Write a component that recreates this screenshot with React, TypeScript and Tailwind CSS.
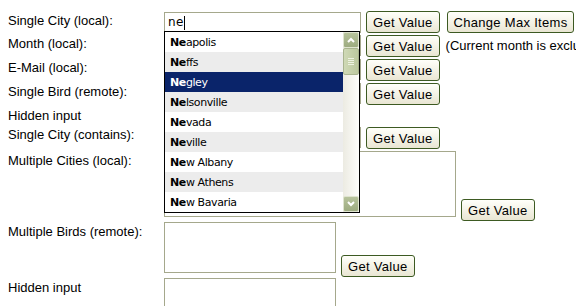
import { FunctionComponent, ReactNode } from "react";

const cities = [
  "Neapolis",
  "Neffs",
  "Negley",
  "Nelsonville",
  "Nevada",
  "Neville",
  "New Albany",
  "New Athens",
  "New Bavaria",
];

const Btn: FunctionComponent<{ children: ReactNode; className?: string }> = ({ children, className }) => (
  <button
    className={
      "h-[22px] shrink-0 px-[6px] border border-[#3d5a22] rounded-[3px] bg-linear-to-b from-[#fffffa] to-[#e9e6d3] text-[13px] tracking-[0.3px] leading-none text-black whitespace-nowrap " +
      (className ?? "")
    }
  >
    {children}
  </button>
);

const Label: FunctionComponent<{ children: ReactNode; className?: string }> = ({ children, className }) => (
  <div className={"w-[156px] shrink-0 whitespace-nowrap " + (className ?? "")}>{children}</div>
);

const Field = () => <div className="w-[197px] h-[21px] shrink-0 border border-[#a5a88c] bg-white" />;

const Chevron = ({ up }: { up?: boolean }) => (
  <svg width="8" height="6" viewBox="0 0 8 6">
    <path d={up ? "M1 5 L4 2 L7 5" : "M1 1 L4 4 L7 1"} fill="none" stroke="white" strokeWidth="2" />
  </svg>
);

const ScrollBtn = ({ up }: { up?: boolean }) => (
  <div className="h-[16px] flex items-center justify-center border border-[#dfe4cf] rounded-[2px] bg-linear-to-b from-[#b7c39c] to-[#9dab80]">
    <Chevron up={up} />
  </div>
);

const Dropdown = () => (
  <div className="absolute left-[164px] top-[31px] w-[196px] h-[182px] border border-black bg-white flex font-['DejaVu_Sans',sans-serif] text-[11px] tracking-[-0.4px]">
    <div className="flex-1 flex flex-col">
      {cities.map((c, i) => (
        <div
          key={c}
          className={
            "h-[20px] pl-[5px] flex items-center whitespace-nowrap " +
            (i === 2 ? "bg-[#0a246a] text-white" : i % 2 === 1 ? "bg-[#ececec] text-black" : "bg-white text-black")
          }
        >
          <b>{c.slice(0, 2)}</b>
          {c.slice(2)}
        </div>
      ))}
    </div>
    <div className="w-[16px] flex flex-col bg-linear-to-r from-[#ecebe2] to-[#fdfdfb]">
      <ScrollBtn up />
      <div className="h-[27px] flex flex-col items-center justify-center gap-[1px] border border-[#a9b48f] rounded-[2px] bg-linear-to-r from-[#cfd9b6] to-[#bcc89e]">
        <div className="w-[6px] h-[1px] bg-[#eef2e2]" />
        <div className="w-[6px] h-[1px] bg-[#eef2e2]" />
        <div className="w-[6px] h-[1px] bg-[#eef2e2]" />
        <div className="w-[6px] h-[1px] bg-[#eef2e2]" />
      </div>
      <div className="flex-1" />
      <ScrollBtn />
    </div>
  </div>
);

export default function App() {
  return (
    <div className="relative w-[576px] h-[306px] overflow-hidden bg-white text-black text-[13px] leading-[15px] font-['Liberation_Sans',Arial,sans-serif]">
      <div className="pt-[11px] pl-[8px] flex flex-col">
        <div className="flex items-start h-[22px]">
          <Label className="pt-[2px]">Single City (local):</Label>
          <div className="mt-[1px] w-[197px] h-[21px] shrink-0 border border-[#a5a88c] bg-white flex items-center pl-[3px] font-['DejaVu_Sans',sans-serif] text-[12px] tracking-[0.5px]">
            ne<span className="w-[1px] h-[14px] bg-black" />
          </div>
          <Btn className="ml-[5px]">Get Value</Btn>
          <Btn className="ml-[7px]">Change Max Items</Btn>
        </div>
        <div className="flex items-start h-[22px] mt-[2px]">
          <Label className="pt-[1px]">Month (local):</Label>
          <Field />
          <Btn className="ml-[5px]">Get Value</Btn>
          <div className="ml-[6px] pt-[3px] shrink-0 whitespace-nowrap">(Current month is excluded from list)</div>
        </div>
        <div className="flex items-start h-[22px] mt-[2px]">
          <Label className="pt-[1px]">E-Mail (local):</Label>
          <Field />
          <Btn className="ml-[5px]">Get Value</Btn>
        </div>
        <div className="flex items-start h-[22px] mt-[2px]">
          <Label className="pt-[1px]">Single Bird (remote):</Label>
          <Field />
          <Btn className="ml-[5px]">Get Value</Btn>
        </div>
        <div className="h-[18px] mt-[2px] pt-[1px]">Hidden input</div>
        <div className="flex items-start h-[22px] mt-[2px]">
          <Label>Single City (contains):</Label>
          <Field />
          <Btn className="ml-[5px]">Get Value</Btn>
        </div>
        <div className="flex items-end mt-[2px]">
          <Label className="self-start pt-[2px]">Multiple Cities (local):</Label>
          <div className="w-[292px] h-[66px] shrink-0 mb-[4px] border border-[#a5a88c] bg-white" />
          <Btn className="ml-[5px]">Get Value</Btn>
        </div>
        <div className="flex items-end mt-[1px]">
          <Label className="self-start pt-[2px]">Multiple Birds (remote):</Label>
          <div className="w-[172px] h-[51px] shrink-0 mb-[4px] border border-[#a5a88c] bg-white" />
          <Btn className="ml-[5px]">Get Value</Btn>
        </div>
        <div className="flex items-start mt-[1px]">
          <Label className="pt-[2px]">Hidden input</Label>
          <div className="w-[172px] h-[51px] shrink-0 border border-[#a5a88c] bg-white" />
        </div>
      </div>
      <Dropdown />
    </div>
  );
}
